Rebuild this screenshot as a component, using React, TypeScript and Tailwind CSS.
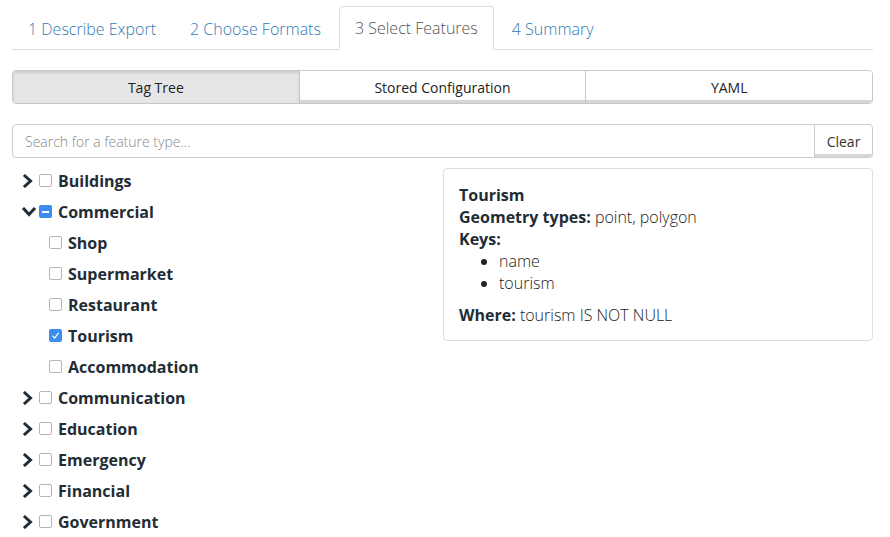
import React from "react";

const font = { fontFamily: '"Open Sans", "Noto Sans", sans-serif' };

function ChevronRight() {
  return (
    <svg width="12" height="14" viewBox="0 0 12 14" className="shrink-0">
      <path d="M3 2 L8.5 7 L3 12" fill="none" stroke="#1f2d36" strokeWidth="3" strokeLinecap="square" strokeLinejoin="miter" />
    </svg>
  );
}
function ChevronDown() {
  return (
    <svg width="14" height="12" viewBox="0 0 14 12" className="shrink-0">
      <path d="M2 3 L7 8.5 L12 3" fill="none" stroke="#1f2d36" strokeWidth="3" strokeLinecap="square" strokeLinejoin="miter" />
    </svg>
  );
}

function Box({ state }: { state: "off" | "on" | "mixed" }) {
  if (state === "off")
    return <span className="inline-block w-[13px] h-[13px] rounded-[2px] border border-[#b5b5b5] bg-white shrink-0" />;
  return (
    <span className="inline-flex items-center justify-center w-[13px] h-[13px] rounded-[2px] bg-[#3b8ef0] shrink-0">
      {state === "mixed" ? (
        <span className="block w-[7px] h-[2px] bg-white" />
      ) : (
        <svg width="9" height="9" viewBox="0 0 9 9">
          <path d="M1.5 4.8 L3.6 7 L7.6 1.8" fill="none" stroke="white" strokeWidth="1.2" />
        </svg>
      )}
    </span>
  );
}

type Row = { label: string; level: number; chevron?: "right" | "down"; state: "off" | "on" | "mixed" };

const rows: Row[] = [
  { label: "Buildings", level: 0, chevron: "right", state: "off" },
  { label: "Commercial", level: 0, chevron: "down", state: "mixed" },
  { label: "Shop", level: 1, state: "off" },
  { label: "Supermarket", level: 1, state: "off" },
  { label: "Restaurant", level: 1, state: "off" },
  { label: "Tourism", level: 1, state: "on" },
  { label: "Accommodation", level: 1, state: "off" },
  { label: "Communication", level: 0, chevron: "right", state: "off" },
  { label: "Education", level: 0, chevron: "right", state: "off" },
  { label: "Emergency", level: 0, chevron: "right", state: "off" },
  { label: "Financial", level: 0, chevron: "right", state: "off" },
  { label: "Government", level: 0, chevron: "right", state: "off" },
];

export default function App() {
  return (
    <div className="w-[890px] h-[537px] overflow-hidden bg-white pl-[12px] pr-[17px] pt-[6px] text-[#333]" style={font}>
      {/* Tabs */}
      <div className="flex border-b border-[#ddd] h-[44px]">
        {["1 Describe Export", "2 Choose Formats", "3 Select Features", "4 Summary"].map((t, i) =>
          i === 2 ? (
            <div
              key={t}
              className="mr-[2px] px-[15px] h-[44px] leading-[42px] text-[16px] font-light text-[#555] bg-white border border-[#ddd] border-b-white rounded-t-[4px] -mb-px"
            >
              {t}
            </div>
          ) : (
            <div key={t} className="mr-[2px] px-[15px] h-[43px] leading-[44px] text-[16px] font-light text-[#337ab7] border border-transparent">
              {t}
            </div>
          )
        )}
      </div>

      {/* Button group */}
      <div className="mt-[20px] flex h-[34px] rounded-[4px] overflow-hidden border border-[#c8c8c8] text-[14px] text-[#222]">
        <div className="flex-1 flex items-center justify-center bg-[#e6e6e6] shadow-[inset_0_2px_3px_rgba(0,0,0,0.12)] border-r border-[#c8c8c8]">
          Tag Tree
        </div>
        <div className="flex-1 flex items-center justify-center bg-white border-r border-[#c8c8c8] shadow-[inset_0_-3px_0_#d6d6d6]">
          Stored Configuration
        </div>
        <div className="flex-1 flex items-center justify-center bg-white shadow-[inset_0_-3px_0_#d6d6d6]">YAML</div>
      </div>

      {/* Search */}
      <div className="mt-[20px] flex h-[34px] rounded-[4px] border border-[#ccc] overflow-hidden">
        <div className="flex-1 flex items-center px-[12px] text-[14px] font-light text-[#888]">Search for a feature type...</div>
        <div className="w-[58px] flex items-center justify-center border-l border-[#ccc] text-[14px] text-[#333] shadow-[inset_0_-3px_0_#d6d6d6]">
          Clear
        </div>
      </div>

      {/* Body */}
      <div className="flex gap-[14px]">
        <div className="flex-1 pt-[7px]">
          {rows.map((r) => (
            <div key={r.label} className="flex items-center h-[31px]" style={{ paddingLeft: r.level ? 37 : 10 }}>
              {r.level === 0 && (
                <span className="w-[17px] flex items-center">
                  {r.chevron === "down" ? <ChevronDown /> : <ChevronRight />}
                </span>
              )}
              <Box state={r.state} />
              <span className="ml-[6px] text-[16px] font-bold text-[#1f2d36]">{r.label}</span>
            </div>
          ))}
        </div>
        <div className="w-[430px] mt-[10px] self-start border border-[#ddd] rounded-[4px] px-[15px] pt-[15px] pb-[14px] text-[16px] leading-[22px] font-light text-[#222]">
          <div className="font-bold text-[#1f2d36]">Tourism</div>
          <div>
            <span className="font-bold text-[#1f2d36]">Geometry types:</span> point, polygon
          </div>
          <div className="font-bold text-[#1f2d36]">Keys:</div>
          <ul className="list-disc pl-[40px] mb-[10px]">
            <li>name</li>
            <li>tourism</li>
          </ul>
          <div>
            <span className="font-bold text-[#1f2d36]">Where:</span> tourism IS NOT NULL
          </div>
        </div>
      </div>
    </div>
  );
}
